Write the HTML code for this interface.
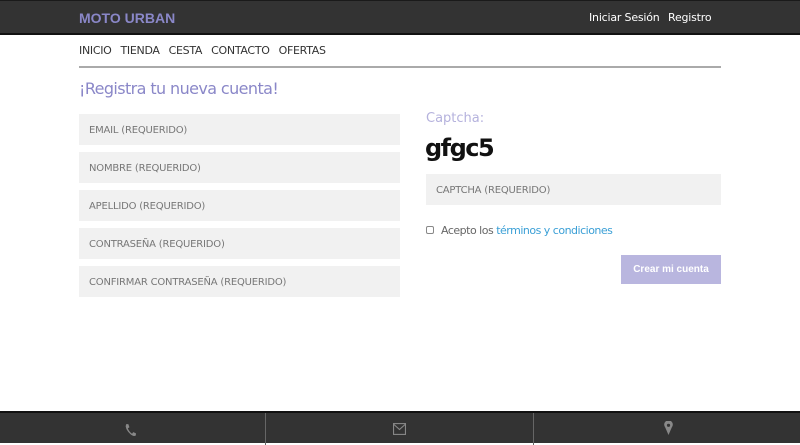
<!DOCTYPE html>
<html><head><meta charset="utf-8"><style>
*{box-sizing:border-box;margin:0;padding:0}
body{width:800px;height:443px;overflow:hidden;background:#fff;font-family:"DejaVu Sans","Liberation Sans",sans-serif;position:relative}
.hdr{position:absolute;left:0;top:0;width:800px;height:35px;background:#333;border-top:1px solid #1a1a1a;border-bottom:2px solid #111}
.logo{position:absolute;left:79px;top:9px;color:#8a87c8;font-weight:bold;font-family:"Liberation Sans",sans-serif;font-size:14px}
.hr{position:absolute;top:10px;color:#fff;font-size:11px;letter-spacing:-0.2px}
.nav{position:absolute;left:79px;top:44px;font-size:11px;color:#333;letter-spacing:-0.3px}
.nav span{margin-right:9px}
.line{position:absolute;left:79px;top:66px;width:642px;height:2px;background:#aaa}
h1{position:absolute;left:79px;top:79px;font-weight:normal;font-size:16px;letter-spacing:-0.6px;color:#8a87c8}
.in{position:absolute;left:79px;width:321px;height:31px;background:#f1f1f1;font-size:10px;color:#777;padding:11px 0 0 10px;letter-spacing:-0.2px}
.cap{position:absolute;left:426px;top:111px;color:#b5b2dd;font-size:13px}
.code{position:absolute;left:425px;top:134px;font-size:24px;font-weight:bold;color:#111;letter-spacing:-1.5px}
.chk{position:absolute;left:426px;top:226px;width:8px;height:8px;border:1px solid #888;border-radius:2px}
.acc{position:absolute;left:441px;top:224px;font-size:11px;color:#666;letter-spacing:-0.5px}
.acc a{color:#3a9fd6}
.btn{position:absolute;left:621px;top:255px;width:100px;height:29px;background:#b9b6df;color:#fff;font-size:10px;font-weight:bold;font-family:"Liberation Sans",sans-serif;text-align:center;line-height:29px}
.ftr{position:absolute;left:0;top:411px;width:800px;height:32px;background:#333;border-top:2px solid #111}
.dv{position:absolute;top:0;width:1px;height:32px;background:#666}
</style></head><body>
<div class="hdr"><div class="logo">MOTO URBAN</div><div class="hr" style="left:589px">Iniciar Sesión</div><div class="hr" style="left:668px">Registro</div></div>
<div class="nav"><span>INICIO</span><span>TIENDA</span><span>CESTA</span><span>CONTACTO</span><span>OFERTAS</span></div>
<div class="line"></div>
<h1>¡Registra tu nueva cuenta!</h1>
<div class="in" style="top:114px">EMAIL (REQUERIDO)</div>
<div class="in" style="top:152px">NOMBRE (REQUERIDO)</div>
<div class="in" style="top:190px">APELLIDO (REQUERIDO)</div>
<div class="in" style="top:228px">CONTRASEÑA (REQUERIDO)</div>
<div class="in" style="top:266px">CONFIRMAR CONTRASEÑA (REQUERIDO)</div>
<div class="cap">Captcha:</div>
<div class="code">gfgc5</div>
<div class="in" style="left:426px;width:295px;top:174px">CAPTCHA (REQUERIDO)</div>
<div class="chk"></div>
<div class="acc">Acepto los <a>términos y condiciones</a></div>
<div class="btn">Crear mi cuenta</div>
<div class="ftr">
<div class="dv" style="left:265px"></div><div class="dv" style="left:533px"></div>
<svg style="position:absolute;left:124px;top:10px" width="13" height="14" viewBox="0 0 12 13"><path d="M2 1 L4 1 L5 4 L3.5 5 Q5 8.5 7.5 10 L8.5 8.5 L11 9.5 L11 11.5 Q9 13 6 10.5 Q2 7 1.5 3 Z" fill="#888"/></svg>
<svg style="position:absolute;left:393px;top:10px" width="13" height="12" viewBox="0 0 12 11"><rect x="0.5" y="0.5" width="11" height="10" fill="none" stroke="#888"/><path d="M0.5 1 L6 6 L11.5 1" fill="none" stroke="#888"/></svg>
<svg style="position:absolute;left:664px;top:8px" width="9" height="14" viewBox="0 0 8 13"><path d="M4 13 L1 6 A4 4 0 1 1 7 6 Z" fill="#888"/><circle cx="4" cy="4" r="1.5" fill="#333"/></svg>
</div>
</body></html>
